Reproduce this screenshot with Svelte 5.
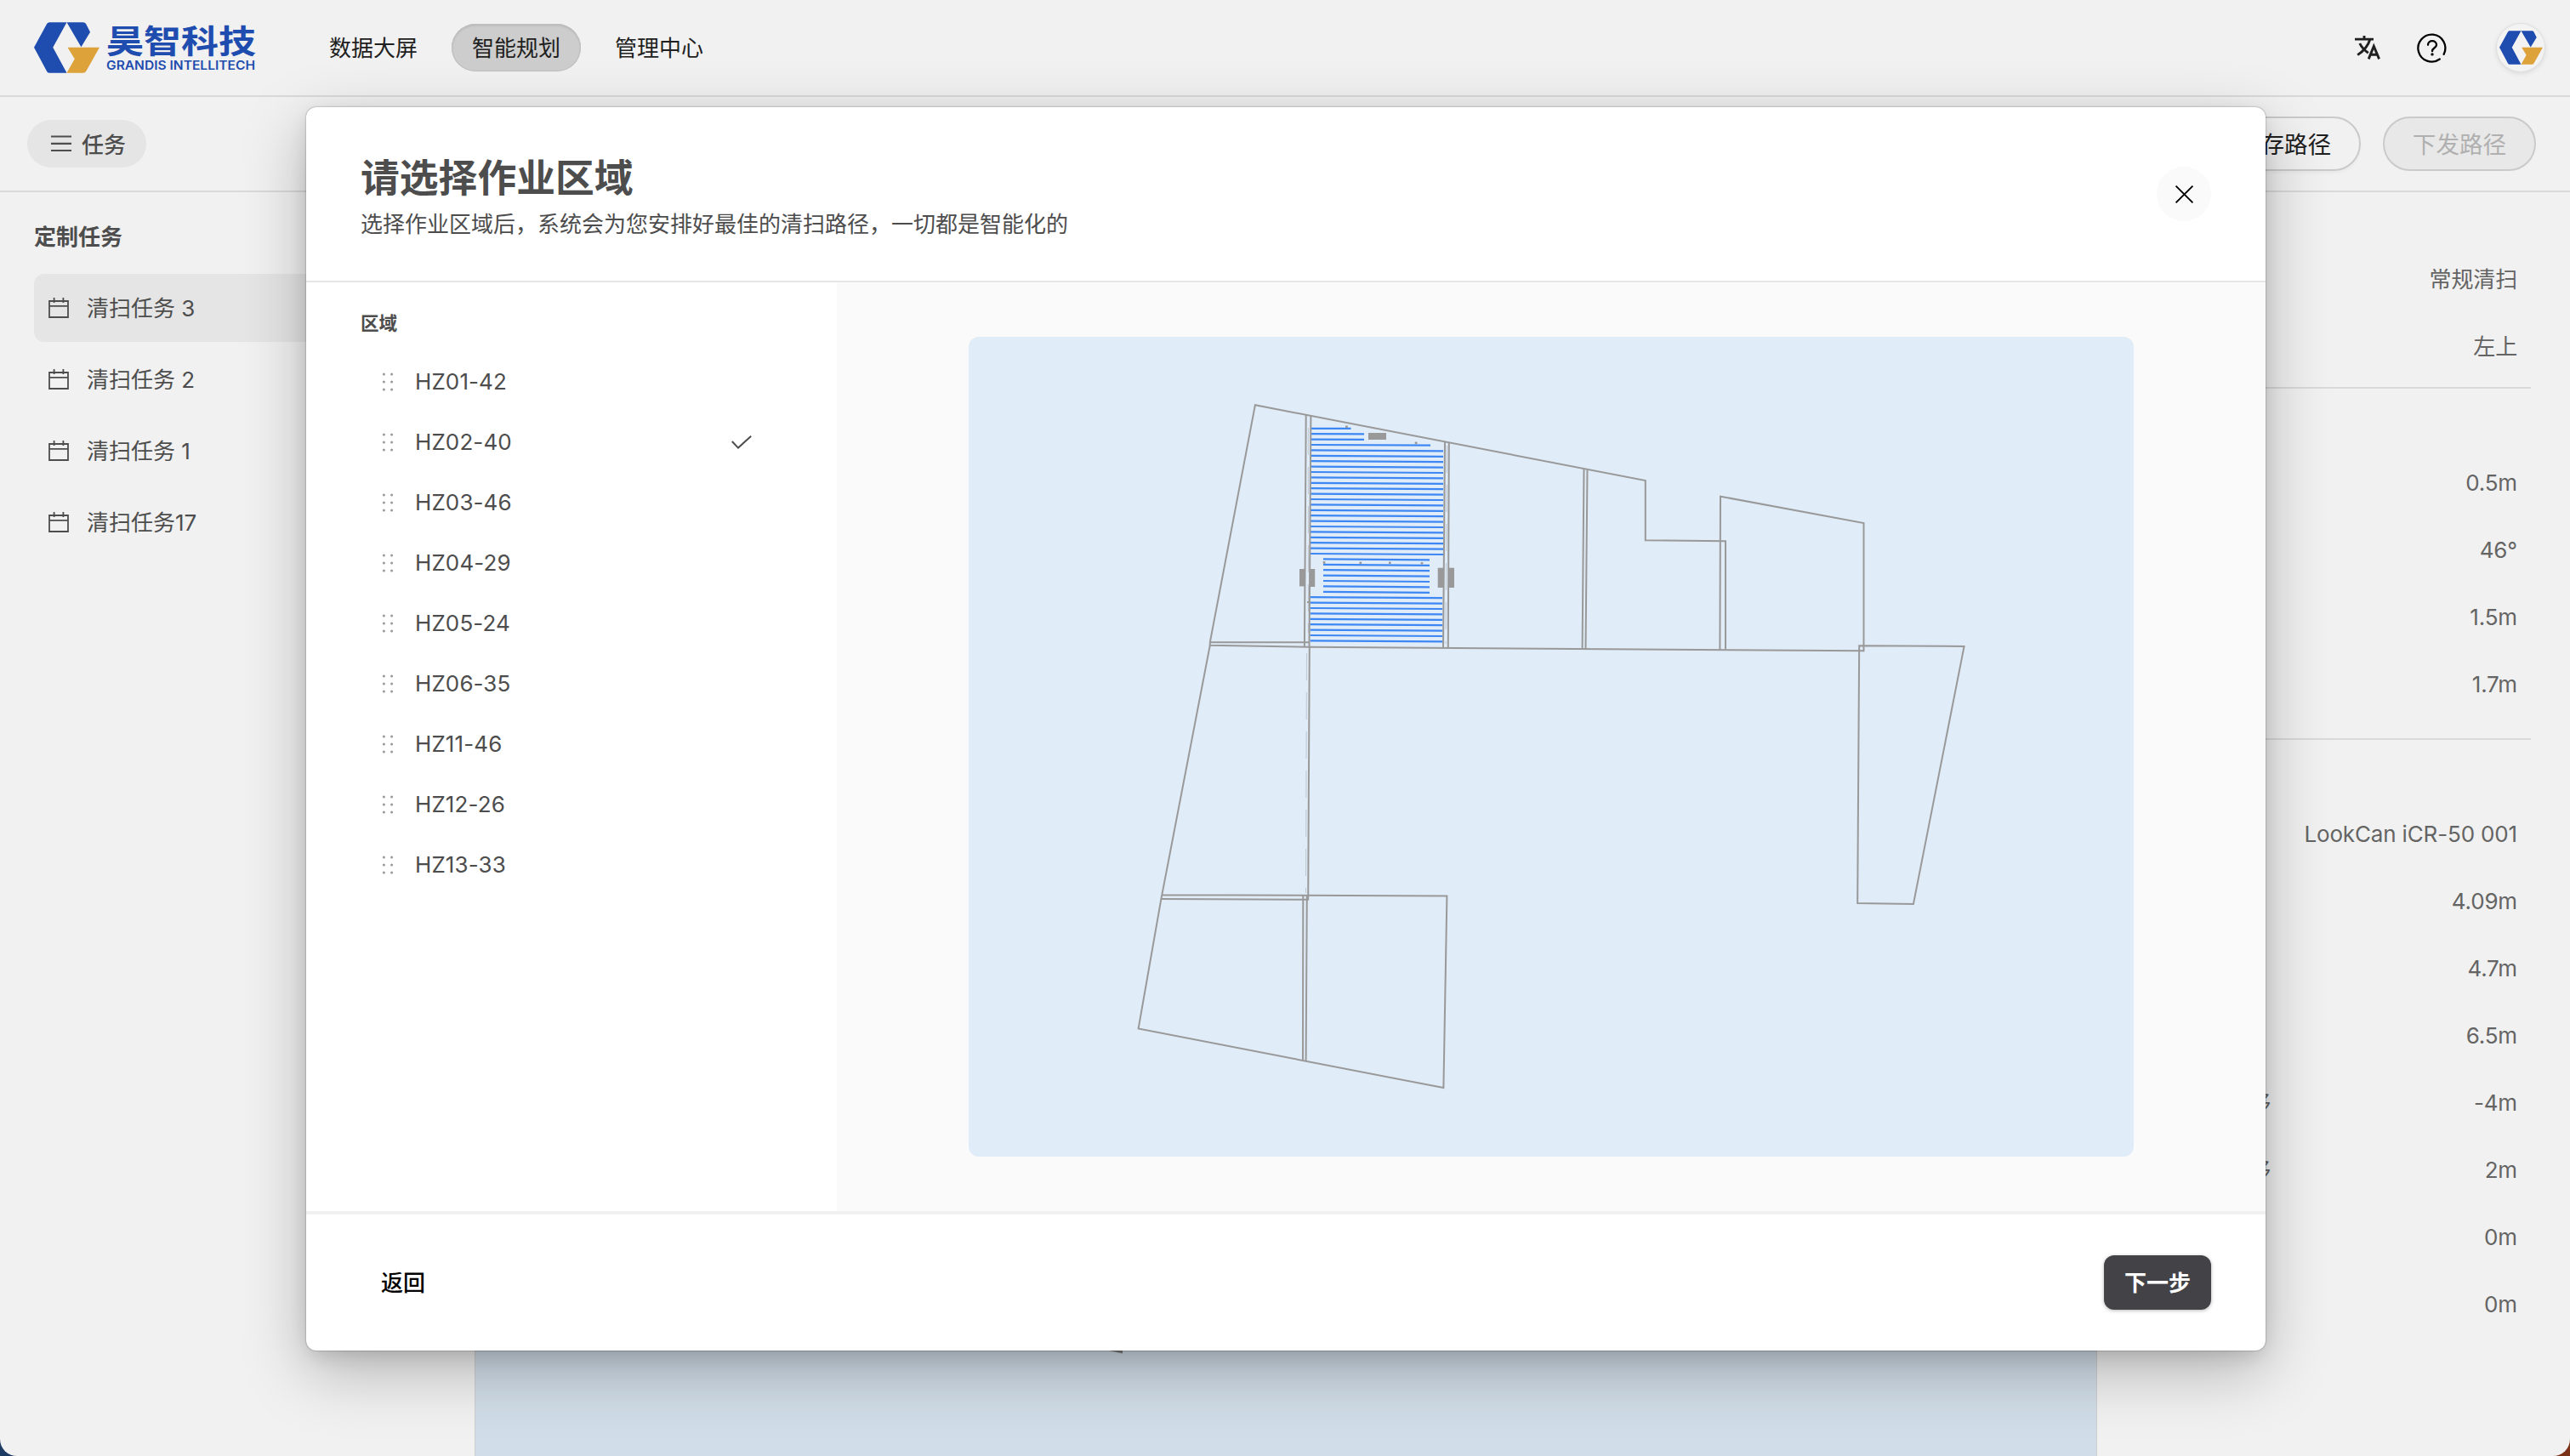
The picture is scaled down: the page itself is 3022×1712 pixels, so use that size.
<script>
  const navItems = [
    { label: '数据大屏', active: false },
    { label: '智能规划', active: true },
    { label: '管理中心', active: false },
  ];

  const tasks = ['清扫任务 3', '清扫任务 2', '清扫任务 1', '清扫任务17'];

  const zones = ['HZ01-42', 'HZ02-40', 'HZ03-46', 'HZ04-29', 'HZ05-24', 'HZ06-35', 'HZ11-46', 'HZ12-26', 'HZ13-33'];
  const selectedZone = 'HZ02-40';

  const sections = [
    { name: 'mode', rows: [['', '常规清扫'], ['', '左上']] },
    { name: 'path', rows: [['', '0.5m'], ['', '46°'], ['', '1.5m'], ['', '1.7m']] },
    {
      name: 'robot',
      rows: [
        ['', 'LookCan iCR-50 001'],
        ['', '4.09m'],
        ['', '4.7m'],
        ['', '6.5m'],
        ['横向偏移', '-4m'],
        ['纵向偏移', '2m'],
        ['', '0m'],
        ['', '0m'],
      ],
    },
  ];

  // Sweep lanes inside the selected zone, evenly spaced from top to bottom.
  const lanes = Array.from({ length: 40 }, (_, k) => {
    const y = 503.8 + 6.4 * k;
    if (k === 0) return { x1: 1541.5, x2: 1588.5, y1: y, y2: y };
    if (k < 3) return { x1: 1541.5, x2: 1604, y1: y, y2: y + 0.2 };
    if (k === 3) return { x1: 1541.5, x2: 1682, y1: y, y2: y + 0.6 };
    if (k < 24) return { x1: 1541, x2: 1697, y1: y, y2: y + 1 };
    if (k < 31) return { x1: 1556, x2: 1681, y1: y, y2: y + 1 };
    return { x1: 1540.5, x2: 1696, y1: y, y2: y + 1 };
  });

  const walls = [
    'M1422.8 755.2L1475.9 476.2L1934.8 565V635.3L2029 636.3V763.6',
    'M1422.8 755.2H1539.5',
    'M1422.8 755.2V758.7L1539 760.8L2191.5 765.3V615L2023 583.7L2022.4 763.6',
    'M1535.7 487.7L1533.9 760.8M1541.4 488.5L1539.5 760.8',
    'M1699 519.3L1697 761.8M1703.8 520.2L1702.8 761.8',
    'M1862.5 551.3L1860.6 763M1866.5 552.2L1864.5 763',
    'M2186.2 759.2L2309.6 759.9L2249.9 1063L2184.2 1062Z',
    'M1422.8 758.7L1365.4 1056.9L1338.6 1209.5L1697.4 1279.1L1701.4 1053.4L1365.8 1052.3',
    'M1539.8 760.8L1538.2 1057.8L1365.2 1056.9',
    'M1532.3 1052.8L1532 1246.8M1536.8 1053L1535.6 1247.6',
  ];

  const blocks = [
    [1609, 509, 21, 8],
    [1528, 669, 6.6, 20.4],
    [1540, 669, 6.2, 21],
    [1690.7, 667.7, 6.5, 23.3],
    [1703, 667.7, 7, 23.3],
    [1582, 500.5, 2.8, 2.6],
    [1663.7, 519.5, 2.8, 2.6],
    [1555.7, 660, 2.6, 2.8],
    [1598.5, 660.5, 2.6, 2.6],
    [1633, 660.5, 2.6, 2.6],
    [1670.7, 661, 2.6, 2.6],
    [1537, 707, 2, 2],
  ];
</script>

{#snippet mark()}
  <svg class="mark" viewBox="0 0 232 180">
    <path fill="#1f4caf" d="M0 89L46 5Q49 0 55 0H116L67 89L116 180H55Q49 180 46 175Z" />
    <path fill="#1f4caf" d="M116 0H174Q181 0 184 6L199 35L167 88Z" />
    <path fill="#dda23a" d="M119 89H232L185 173Q181 180 174 180H116L144 130Z" />
  </svg>
{/snippet}

<div class="desktop">
  <div class="app">
    <header class="topbar">
      <div class="brand">
        {@render mark()}
        <svg class="wordmark" viewBox="0 0 176 60">
          <text class="brand-cn" x="0" y="36" textLength="176" lengthAdjust="spacingAndGlyphs">昊智科技</text>
          <text class="brand-en" x="0" y="55.5" textLength="175" lengthAdjust="spacingAndGlyphs">GRANDIS INTELLITECH</text>
        </svg>
      </div>
      <nav>
        {#each navItems as item}
          <a class:active={item.active}>{item.label}</a>
        {/each}
      </nav>
      <div class="actions">
        <svg class="translate" viewBox="0 0 30 28">
          <path d="M0 4.1H22M11 0V4.1M17.8 4.5C15.5 12 9.5 18.5 3.2 22.6M5.8 9C8 14 12 17.5 15.8 20.2" />
          <path d="M16.2 27.4L22.3 12.4L28.6 27.4M18.3 22.3H26.4" />
        </svg>
        <svg class="help" viewBox="0 0 36 36">
          <path d="M31.6 25.9A16 16 0 1 0 26.8 31.5" />
          <path d="M13 14.8C13 8.6 23 8.6 23 14.8C23 18.4 18 18.2 18 22.2" />
          <circle cx="18" cy="25.9" r="1.7" />
        </svg>
        <div class="avatar">{@render mark()}</div>
      </div>
    </header>

    <div class="toolbar">
      <button class="tasks-toggle">
        <svg viewBox="0 0 24 20"><path d="M0 1.5H24M0 9.8H24M0 18H24" /></svg>
        <span>任务</span>
      </button>
      <div class="path-actions">
        <button class="pill">保存路径</button>
        <button class="pill disabled">下发路径</button>
      </div>
    </div>

    <main>
      <aside class="sidebar">
        <h2>定制任务</h2>
        {#each tasks as task, i}
          <div class="task" class:current={i === 0}>
            <svg viewBox="0 0 24 24">
              <path d="M1 4H23V23H1ZM1 9.8H23M6.6 0V6M17.4 0V6" />
            </svg>
            <span>{task}</span>
          </div>
        {/each}
      </aside>

      <div class="stage">
        <svg viewBox="0 0 16 4"><path d="M0 0H16V3.6L9 2Z" /></svg>
      </div>

      <aside class="details">
        {#each sections as section}
          <section class={section.name}>
            {#each section.rows as [label, value]}
              <div class="row"><span class="label">{label}</span><span>{value}</span></div>
            {/each}
          </section>
        {/each}
      </aside>
    </main>
  </div>

  <div class="dialog" role="dialog">
    <div class="dialog-head">
      <div>
        <h1>请选择作业区域</h1>
        <p>选择作业区域后，系统会为您安排好最佳的清扫路径，一切都是智能化的</p>
      </div>
      <button class="close" aria-label="关闭">
        <svg viewBox="0 0 22 22"><path d="M0.6 0.6L21.4 21.4M21.4 0.6L0.6 21.4" /></svg>
      </button>
    </div>

    <div class="dialog-body">
      <div class="zones">
        <h3>区域</h3>
        {#each zones as zone}
          <div class="zone">
            <svg class="grip" viewBox="0 0 14 22">
              {#each [2.4, 11.6] as cx}
                {#each [2, 11, 20] as cy}
                  <circle {cx} {cy} r="1.5" />
                {/each}
              {/each}
            </svg>
            <span>{zone}</span>
            {#if zone === selectedZone}
              <svg class="check" viewBox="0 0 24 16"><path d="M0.8 7L8 14.6L23.2 0.8" /></svg>
            {/if}
          </div>
        {/each}
      </div>

      <div class="map-area">
        <svg class="map" viewBox="1139 396 1370 964">
          {#each lanes as lane}
            <line class="lane" x1={lane.x1} y1={lane.y1} x2={lane.x2} y2={lane.y2} />
          {/each}
          <path class="scan" d="M1538.4 503V744M1536.5 768L1535.5 1050M1701.4 524L1700 757" />
          {#each walls as d}
            <path class="wall" {d} />
          {/each}
          {#each blocks as [x, y, width, height]}
            <rect class="block" {x} {y} {width} {height} />
          {/each}
        </svg>
      </div>
    </div>

    <div class="dialog-foot">
      <button class="back">返回</button>
      <button class="next">下一步</button>
    </div>
  </div>
</div>

<style>
  :global(body) {
    margin: 0;
    background: linear-gradient(90deg, #1d3a63 50%, #7c3218 50%);
  }

  .desktop {
    position: relative;
    width: 3022px;
    height: 1712px;
    overflow: hidden;
    font-family: Inter, 'Noto Sans CJK SC', sans-serif;
    font-size: 26px;
    color: #4d4d4d;
  }

  .desktop * {
    box-sizing: border-box;
  }

  h1, h2, h3, p {
    margin: 0;
  }

  button {
    border: 0;
    padding: 0;
    background: none;
    font: inherit;
    color: inherit;
  }

  svg {
    display: block;
    flex: none;
    fill: none;
    overflow: visible;
  }

  .app {
    display: flex;
    flex-direction: column;
    height: 100%;
    background: #f1f1f1;
    border-radius: 0 0 20px 20px;
    overflow: hidden;
  }

  .topbar {
    display: flex;
    align-items: center;
    height: 114px;
    padding: 0 30px 0 40px;
    border-bottom: 2px solid #d9d9d9;
  }

  .brand {
    display: flex;
    gap: 8px;
    width: 323px;
  }

  .brand .mark {
    width: 77px;
    height: 60px;
  }

  .wordmark {
    width: 176px;
    height: 60px;
    fill: #1f4caf;
  }

  .brand-cn {
    font: 700 38px 'Noto Sans CJK SC', sans-serif;
  }

  .brand-en {
    font: 600 14.5px Inter, sans-serif;
  }

  nav {
    display: flex;
    gap: 16px;
  }

  nav a {
    height: 56px;
    padding: 0 24px;
    border-radius: 28px;
    line-height: 58px;
    color: #202020;
  }

  nav a.active {
    background: #cdcdcd;
    box-shadow: inset 0 0 0 1px #c0c0c0, inset 0 2px 3px rgba(0, 0, 0, 0.12);
  }

  .actions {
    display: flex;
    align-items: center;
    margin-left: auto;
  }

  .translate {
    width: 30px;
    height: 28px;
    margin-right: 43px;
    stroke: #202020;
    stroke-width: 2.9;
  }

  .help {
    width: 36px;
    height: 36px;
    margin-right: 58px;
    stroke: #000;
    stroke-width: 2.3;
    stroke-linecap: round;
  }

  .help circle {
    fill: #000;
    stroke: none;
  }

  .avatar {
    display: grid;
    place-items: center;
    width: 56px;
    height: 56px;
    border-radius: 50%;
    background: #f3f3f3;
    box-shadow: 0 0 0 1px #e0e0e0, 0 2px 6px rgba(0, 0, 0, 0.12);
  }

  .avatar .mark {
    width: 51px;
    height: 40px;
  }

  .toolbar {
    display: flex;
    align-items: center;
    justify-content: space-between;
    height: 112px;
    padding: 0 40px 0 32px;
    border-bottom: 2px solid #d9d9d9;
  }

  .tasks-toggle {
    display: flex;
    align-items: center;
    gap: 12px;
    height: 56px;
    padding: 0 24px 0 28px;
    border-radius: 28px;
    background: #e5e5e5;
    font-weight: 500;
  }

  .tasks-toggle span {
    padding-bottom: 2px;
  }

  .tasks-toggle svg {
    width: 24px;
    height: 20px;
    stroke: #4d4d4d;
    stroke-width: 2.2;
  }

  .path-actions {
    display: flex;
    gap: 26px;
  }

  .pill {
    width: 180px;
    height: 64px;
    padding-bottom: 3px;
    border: 2px solid #cacaca;
    border-radius: 32px;
    font-size: 27.6px;
    color: #202020;
    box-shadow: 0 3px 3px rgba(0, 0, 0, 0.03);
  }

  .pill.disabled {
    background: #e8e8e8;
    color: #b0b0b0;
    box-shadow: none;
  }

  main {
    display: flex;
    flex: 1;
    min-height: 0;
  }

  .sidebar {
    display: flex;
    flex-direction: column;
    gap: 4px;
    width: 558px;
    padding: 30px 24px 0 40px;
  }

  .sidebar h2 {
    height: 62px;
    line-height: 46px;
    font-size: 26px;
    font-weight: 700;
  }

  .task {
    display: flex;
    align-items: center;
    gap: 21px;
    height: 80px;
    padding-left: 17px;
    border-radius: 12px;
  }

  .task span {
    padding-bottom: 3px;
  }

  .task.current {
    background: #e5e5e5;
  }

  .task svg {
    width: 24px;
    height: 24px;
    stroke: #4d4d4d;
    stroke-width: 1.8;
  }

  .stage {
    flex: 1;
    padding: 1362px 0 0 745px;
    border: solid #cfcfcf;
    border-width: 0 1px;
    background: #d1dde8;
  }

  .stage svg {
    width: 16px;
    height: 4px;
    fill: #808080;
  }

  .details {
    width: 556px;
    padding-right: 46px;
    color: #646464;
    letter-spacing: -0.15px;
  }

  .details section {
    padding: 71px 16px 24px 62px;
    border-bottom: 2px solid #d9d9d9;
  }

  .details .mode {
    padding-top: 63px;
    padding-bottom: 8px;
  }

  .details .robot {
    border: 0;
  }

  .row {
    display: flex;
    justify-content: space-between;
    height: 79px;
    line-height: 79px;
  }

  .label {
    width: 142px;
    text-align: right;
  }

  .dialog {
    position: absolute;
    top: 126px;
    left: 360px;
    display: flex;
    flex-direction: column;
    width: 2304px;
    height: 1462px;
    border-radius: 12px;
    background: #fff;
    box-shadow:
      0 0 2px rgba(0, 0, 0, 0.45),
      0 8px 24px -4px rgba(0, 0, 0, 0.14),
      0 24px 76px rgba(0, 0, 0, 0.26);
  }

  .dialog-head {
    display: flex;
    align-items: center;
    justify-content: space-between;
    height: 206px;
    padding: 0 64px;
    border-bottom: 2px solid #e6e6e6;
  }

  h1 {
    margin-top: 8px;
    font-size: 45.8px;
    font-weight: 700;
    line-height: 64px;
  }

  .dialog-head p {
    line-height: 44px;
  }

  .close {
    display: grid;
    place-items: center;
    width: 64px;
    height: 64px;
    border-radius: 50%;
    background: #fafafa;
  }

  .close svg {
    width: 21px;
    height: 21px;
    stroke: #000;
    stroke-width: 2;
  }

  .dialog-body {
    display: flex;
    height: 1092px;
  }

  .zones {
    width: 624px;
    padding: 30px 64px 0;
  }

  .zones h3 {
    height: 51px;
    font-size: 21.6px;
    font-weight: 700;
    line-height: 37px;
  }

  .zone {
    display: flex;
    align-items: center;
    height: 71px;
    padding: 0 36px 0 25px;
  }

  .zone span {
    margin-left: 25px;
    letter-spacing: 0.1px;
  }

  .grip {
    width: 14px;
    height: 22px;
    fill: #999;
  }

  .check {
    width: 24px;
    height: 16px;
    margin-left: auto;
    stroke: #4d4d4d;
    stroke-width: 2;
  }

  .map-area {
    flex: 1;
    padding: 64px 155px;
    background: #fafafa;
  }

  .map {
    width: 1370px;
    height: 964px;
    border-radius: 12px;
    background: #e0ecf8;
  }

  .lane {
    stroke: #3c87f3;
    stroke-width: 2.2;
  }

  .wall {
    stroke: #999;
    stroke-width: 2;
  }

  .scan {
    stroke: #c0c8d0;
    stroke-width: 1;
    stroke-dasharray: 32 14;
  }

  .block {
    fill: #999;
  }

  .dialog-foot {
    display: flex;
    align-items: center;
    justify-content: space-between;
    height: 164px;
    padding: 0 64px;
    border-top: 4px solid #f1f1f1;
  }

  .back {
    padding: 0 24px 3px;
    font-weight: 500;
    color: #000;
  }

  .next {
    width: 126px;
    height: 64px;
    padding-bottom: 3px;
    border-radius: 12px;
    background: #434347;
    font-weight: 700;
    color: #fff;
    box-shadow: 0 1px 4px rgba(0, 0, 0, 0.3);
  }
</style>
